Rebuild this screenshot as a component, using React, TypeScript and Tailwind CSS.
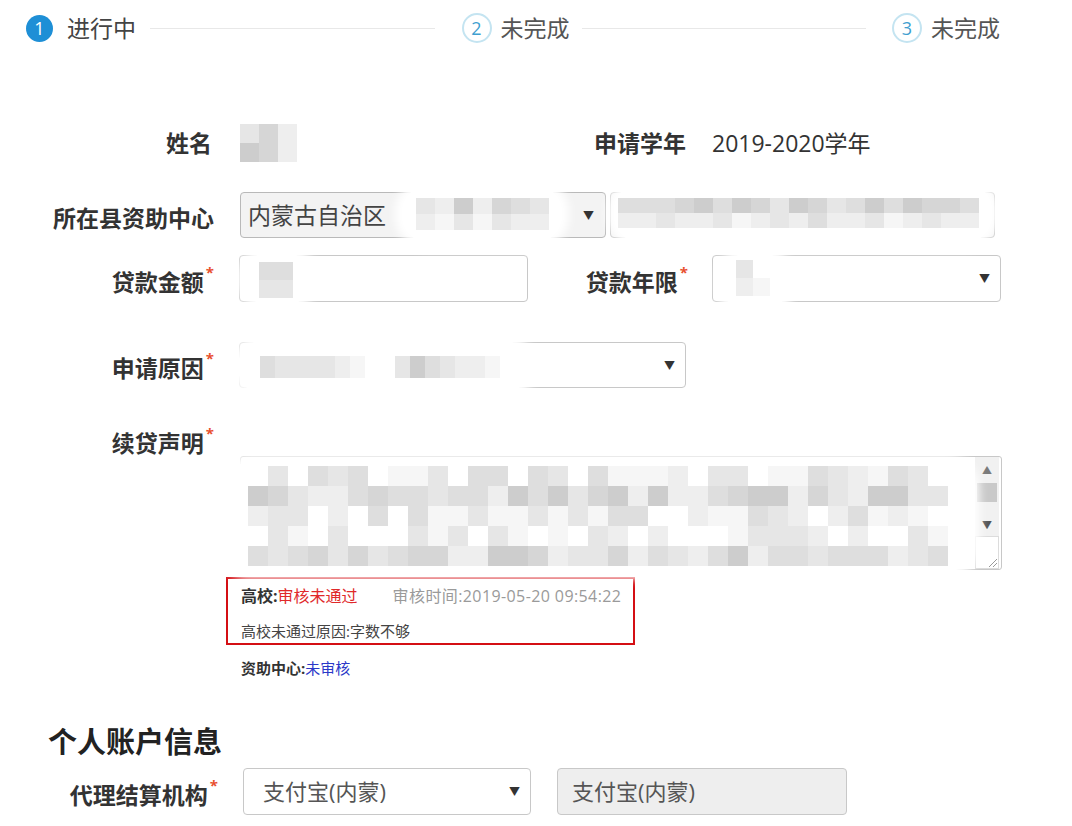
import React from "react";

const shades = [
  "bg-[#c4c4c4]",
  "bg-[#cdcdcd]",
  "bg-[#d6d6d6]",
  "bg-[#dedede]",
  "bg-[#e6e6e6]",
  "bg-[#eeeeee]",
  "bg-[#f6f6f6]",
];

function Mosaic({ rows, cell }: { rows: string[]; cell: string }) {
  return (
    <div className="flex flex-col blur-[0.6px]">
      {rows.map((row, i) => (
        <div key={i} className="flex">
          {row.split("").map((c, j) => (
            <div key={j} className={`${cell} ${c === "w" ? "bg-white" : shades[Number(c)]}`} />
          ))}
        </div>
      ))}
    </div>
  );
}

// pseudo random rows for the long pixelated text
function noiseRows(count: number, cols: number, seed: number, bias: number[]) {
  let s = seed;
  const out: string[] = [];
  for (let i = 0; i < count; i++) {
    let r = "";
    for (let j = 0; j < cols; j++) {
      s = (s * 1103515245 + 12345) % 2147483648;
      const n = (s >>> 16) % 5;
      const v = bias[i] + n;
      r += v > 6 ? "w" : String(v);
    }
    out.push(r);
  }
  return out;
}

function Halo({ className, children }: { className: string; children?: React.ReactNode }) {
  return (
    <div className={`absolute bg-white rounded-[26px] shadow-[0_0_10px_7px_#ffffff] ${className}`}>
      {children}
    </div>
  );
}

function Star() {
  return <span className="text-[#e8502f] text-[15px] leading-none align-top relative top-[-2px] ml-[2px]">*</span>;
}

function Arrow() {
  return <span className="text-[11px] text-[#333] leading-none">▼</span>;
}

function Label({ w, children, star }: { w: string; children: React.ReactNode; star?: boolean }) {
  return (
    <div className={`${w} shrink-0 text-right text-[23px] font-bold text-[#333] leading-[30px] mt-[6px]`}>
      {children}
      {star ? <Star /> : null}
    </div>
  );
}

export default function App() {
  return (
    <div className="w-[1072px] h-[826px] bg-white relative overflow-hidden font-['Open_Sans','Noto_Sans_CJK_SC',sans-serif] text-[#333]">
      {/* steps */}
      <div className="h-[56px] flex items-center pl-[26px] pr-[72px]">
        <div className="w-[27px] h-[27px] rounded-full bg-[#1e8fd6] text-white text-[18px] flex items-center justify-center">1</div>
        <span className="ml-[14px] text-[23px] text-[#444] leading-none">进行中</span>
        <div className="flex-1 h-px bg-[#e8e8e8] ml-[14px] mr-[27px]" />
        <div className="w-[30px] h-[30px] rounded-full border-2 border-[#c4e4f1] text-[#3f9fd0] text-[18px] flex items-center justify-center">2</div>
        <span className="ml-[9px] text-[23px] text-[#555] leading-none">未完成</span>
        <div className="flex-1 h-px bg-[#e8e8e8] ml-[12px] mr-[26px]" />
        <div className="w-[30px] h-[30px] rounded-full border-2 border-[#c4e4f1] text-[#3f9fd0] text-[18px] flex items-center justify-center">3</div>
        <span className="ml-[9px] text-[23px] text-[#555] leading-none">未完成</span>
      </div>

      {/* 姓名 / 申请学年 */}
      <div className="mt-[64px] h-[46px] flex items-center">
        <div className="w-[214px] text-right text-[23px] font-bold leading-[30px] pr-[2px]">姓名</div>
        <div className="w-[314px]" />
        <div className="w-[160px] text-right text-[23px] font-bold leading-[30px] pr-[2px]">申请学年</div>
        <div className="ml-[24px] text-[23px] text-[#333] leading-[30px]">2019-2020学年</div>
      </div>

      {/* 所在县资助中心 */}
      <div className="mt-[26px] h-[46px] flex items-center">
        <Label w="w-[214px]">所在县资助中心</Label>
        <div className="ml-[26px] w-[366px] h-full bg-[#f3f3f3] border border-[#b9b9b9] rounded-[4px] flex items-center justify-between pl-[7px] pr-[11px]">
          <span className="text-[23px] text-[#444]">内蒙古自治区</span>
          <Arrow />
        </div>
        <div className="ml-[4px] w-[385px] h-full bg-[#f3f3f3] border border-[#b9b9b9] rounded-[4px]" />
      </div>

      {/* 贷款金额 / 贷款年限 */}
      <div className="mt-[17px] h-[47px] flex items-center">
        <Label w="w-[214px]" star>贷款金额</Label>
        <div className="ml-[25px] w-[289px] h-full border border-[#c8c8c8] rounded-[4px]" />
        <Label w="w-[160px]" star>贷款年限</Label>
        <div className="ml-[24px] w-[289px] h-full border border-[#c8c8c8] rounded-[4px] flex items-center justify-end pr-[10px]">
          <Arrow />
        </div>
      </div>

      {/* 申请原因 */}
      <div className="mt-[40px] h-[46px] flex items-center">
        <Label w="w-[214px]" star>申请原因</Label>
        <div className="ml-[25px] w-[447px] h-full border border-[#c8c8c8] rounded-[4px] flex items-center justify-end pr-[10px]">
          <Arrow />
        </div>
      </div>

      {/* 续贷声明 */}
      <div className="mt-[37px] h-[30px] flex items-center">
        <Label w="w-[214px]" star>续贷声明</Label>
      </div>
      <div className="mt-[1px] ml-[240px] w-[762px] h-[114px] border border-[#c8c8c8] rounded-[3px] flex">
        <div className="flex-1" />
        <div className="w-[24px] mr-[2px] flex flex-col">
          <div className="h-[26px] bg-[#f1f1f1] flex items-center justify-center text-[10px] text-[#7a7a7a]">▲</div>
          <div className="h-[19px] bg-[#f1f1f1] px-[2px]">
            <div className="h-full bg-[#c9c9c9]" />
          </div>
          <div className="h-[12px] bg-[#f1f1f1]" />
          <div className="h-[22px] bg-[#f1f1f1] flex items-center justify-center text-[10px] text-[#555]">▼</div>
          <div className="flex-1 border border-[#dcdcdc] bg-white flex items-end justify-end">
            <svg width="12" height="12" viewBox="0 0 12 12">
              <path d="M11 3 L3 11 M11 7 L7 11" stroke="#999" strokeWidth="1" />
            </svg>
          </div>
        </div>
      </div>

      {/* 审核状态 */}
      <div className="mt-[7px] ml-[226px] w-[409px] h-[68px] border-2 border-[#d40f14] pl-[13px] pt-[6px] leading-[22px]">
        <div className="h-[22px] flex items-center text-[16px]">
          <span className="font-bold text-[#333]">高校:</span>
          <span className="text-[#e0292a]">审核未通过</span>
          <span className="ml-[35px] text-[#9a9a9a] tracking-[0.4px]">审核时间:2019-05-20 09:54:22</span>
        </div>
        <div className="mt-[13px] h-[22px] flex items-center text-[15px] text-[#444]">高校未通过原因:字数不够</div>
      </div>
      <div className="mt-[13px] ml-[241px] h-[20px] flex items-center text-[15px]">
        <span className="font-bold text-[#333]">资助中心:</span>
        <span className="text-[#2b38c8]">未审核</span>
      </div>

      {/* 个人账户信息 */}
      <div className="mt-[46px] h-[36px] pl-[48px] flex items-center text-[29px] font-bold text-[#222]">个人账户信息</div>
      <div className="mt-[8px] h-[47px] flex items-center">
        <Label w="w-[218px]" star>代理结算机构</Label>
        <div className="ml-[25px] w-[288px] h-full border border-[#c8c8c8] rounded-[4px] flex items-center justify-between pl-[19px] pr-[10px]">
          <span className="text-[22px] text-[#555]">支付宝(内蒙)</span>
          <Arrow />
        </div>
        <div className="ml-[26px] w-[290px] h-full bg-[#eeeeee] border border-[#c8c8c8] rounded-[4px] flex items-center pl-[14px]">
          <span className="text-[22px] text-[#555]">支付宝(内蒙)</span>
        </div>
      </div>

      {/* pixelated (redacted) areas */}
      <Halo className="left-[224px] top-[121px] w-[78px] h-[46px] pl-[16px] pt-[3px]">
        <Mosaic rows={["425", "125"]} cell="w-[19px] h-[19px]" />
      </Halo>
      <Halo className="left-[402px] top-[186px] w-[160px] h-[56px] pl-[14px] pt-[12px]">
        <Mosaic rows={["4515234", "5646455"]} cell="w-[19px] h-[16px]" />
      </Halo>
      <Halo className="left-[614px] top-[184px] w-[378px] h-[58px] pl-[4px] pt-[14px]">
        <Mosaic rows={["3332131241243131223", "5545546545355465455"]} cell="w-[19px] h-[15px]" />
      </Halo>
      <Halo className="left-[244px] top-[252px] w-[66px] h-[54px] pl-[15px] pt-[10px]">
        <Mosaic rows={["33", "44"]} cell="w-[17px] h-[18px]" />
      </Halo>
      <Halo className="left-[724px] top-[252px] w-[62px] h-[62px] pl-[12px] pt-[8px]">
        <Mosaic rows={["4w", "56"]} cell="w-[17px] h-[18px]" />
      </Halo>
      <Halo className="left-[238px] top-[340px] w-[290px] h-[54px] pl-[22px] pt-[16px]">
        <Mosaic rows={["3444456ww4134556"]} cell="w-[15px] h-[22px]" />
      </Halo>
      <Halo className="left-[224px] top-[462px] w-[748px] h-[110px] pl-[24px] pt-[4px]">
        <Mosaic rows={noiseRows(5, 35, 7, [3, 1, 3, 4, 1])} cell="w-[20px] h-[20px]" />
      </Halo>
    </div>
  );
}
